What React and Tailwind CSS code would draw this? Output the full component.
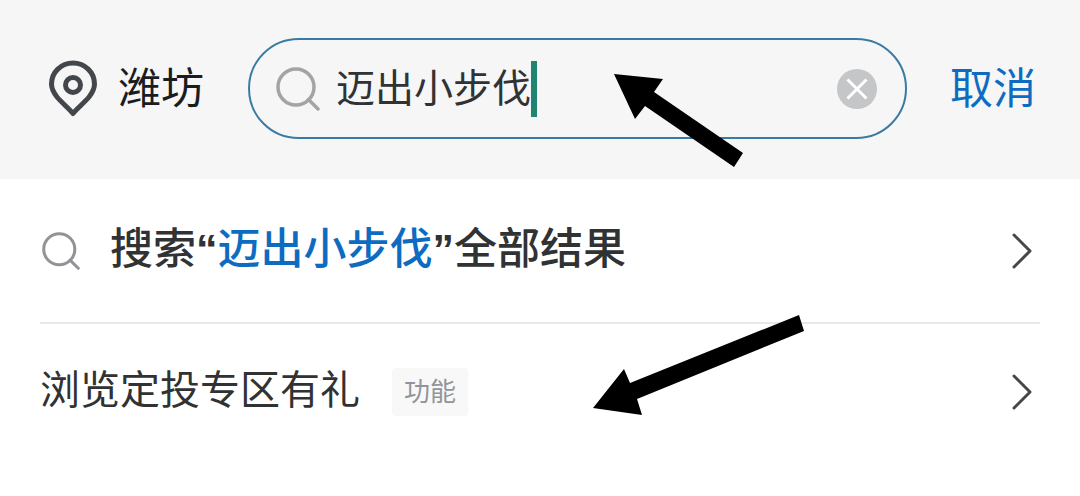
import React, { useState } from "react";

const SearchIcon = ({ className }) => (
  <svg viewBox="0 0 44 44" fill="none" stroke="currentColor" className={className}>
    <circle cx="20" cy="20" r="18" strokeWidth="3.5" />
    <path d="M32.5 32.5l9.500 9.500" strokeWidth="3.5" strokeLinecap="round" />
  </svg>
);

const PinIcon = () => (
  <svg viewBox="0 0 50 58" fill="none" stroke="#43474c" className="w-[50px] shrink-0">
    <path
      d="M25 53.5C21 48.500 14 43 9 37C5.500 32.500 3.500 29 3.500 24a21.500 21 0 0 1 43 0C46.500 29 44.500 32.500 41 37C36 43 29 48.500 25 53.500Z"
      strokeWidth="5"
      strokeLinejoin="round"
    />
    <circle cx="25" cy="25" r="7.5" strokeWidth="5" />
  </svg>
);

const ChevronIcon = () => (
  <svg viewBox="0 0 20 36" fill="none" stroke="#45474a" className="w-5 shrink-0">
    <path d="M2 2l16 16L2 34" strokeWidth="3" strokeLinecap="round" strokeLinejoin="round" />
  </svg>
);

const App = () => {
  const [query, setQuery] = useState("迈出小步伐");

  return (
    <div className="relative min-h-screen bg-white text-[#303234] font-['Liberation_Sans','Noto_Sans_CJK_SC',sans-serif]">
      <header className="flex items-center bg-[#f6f6f6] pt-[38px] pb-10 pl-12 pr-11">
        <button
          type="button"
          className="flex items-center gap-5 text-[43px] leading-[60px] text-[#1a1c1f]"
        >
          <PinIcon />
          潍坊
        </button>
        <label className="ml-11 mr-[43px] flex h-[101px] min-w-0 flex-1 items-center rounded-full border-2 border-[#3a7ba3] pl-[26px] pr-7">
          <SearchIcon className="w-11 shrink-0 text-[#a2a4a6]" />
          <input
            aria-label="搜索"
            value={query}
            onChange={(e) => setQuery(e.target.value)}
            className="ml-4 w-[195px] bg-transparent text-[39px] leading-[56px] outline-none"
          />
          <span className="h-[56px] w-[6px] bg-[#1f8571]" />
          <button
            type="button"
            aria-label="清除"
            onClick={() => setQuery("")}
            className="ml-auto shrink-0"
          >
            <svg viewBox="0 0 40 40" className="w-10">
              <circle cx="20" cy="20" r="20" fill="#c4c6c8" />
              <path d="M10.500 10.500l19 19M29.500 10.500l-19 19" stroke="#fff" strokeWidth="3" />
            </svg>
          </button>
        </label>
        <button type="button" className="text-[43px] leading-[60px] text-[#0d6cc1]">
          取消
        </button>
      </header>

      <main className="px-10">
        <a href="#results" className="flex h-[145px] items-center border-b-2 border-[#e8e8e8] pr-2">
          <SearchIcon className="ml-0.5 w-[38px] shrink-0 text-[#919396]" />
          <span className="ml-[30px] pb-1 text-[43px] font-medium leading-[60px]">
            搜索<b className="font-bold">“</b>
            <span className="text-[#0d6cc1]">迈出小步伐</span>
            <b className="font-bold">”</b>全部结果
          </span>
          <span className="ml-auto">
            <ChevronIcon />
          </span>
        </a>
        <a href="#gift" className="flex h-[136px] items-center pr-2">
          <span className="pb-1 text-[40px] leading-[56px]">浏览定投专区有礼</span>
          <span className="ml-8 rounded bg-[#f8f8f8] px-3 py-1 text-[26px] leading-10 text-[#929499]">
            功能
          </span>
          <span className="ml-auto">
            <ChevronIcon />
          </span>
        </a>
      </main>

      <svg viewBox="0 0 1080 496" className="pointer-events-none absolute inset-x-0 top-0 w-full">
        <path d="M614 74L663 79L654 92L743 153L734 167L645 106L635 119Z" />
        <path d="M593 408L624 369L630 383L799 315L804 331L637 399L642 415Z" />
      </svg>
    </div>
  );
};

export default App;
